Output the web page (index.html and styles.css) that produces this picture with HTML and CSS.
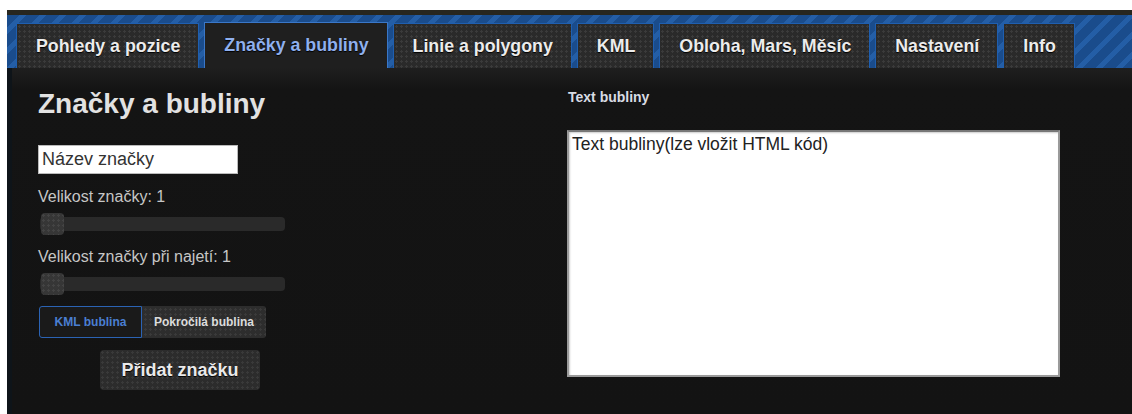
FILE: index.html
```html
<!DOCTYPE html>
<html lang="cs">
<head>
<meta charset="utf-8">
<title>Značky a bubliny</title>
<link rel="stylesheet" href="styles.css">
</head>
<body>
<div class="frame">
  <div class="topline"></div>
  <nav class="tabbar">
    <a class="tab">Pohledy a pozice</a>
    <a class="tab active">Značky a bubliny</a>
    <a class="tab">Linie a polygony</a>
    <a class="tab">KML</a>
    <a class="tab">Obloha, Mars, Měsíc</a>
    <a class="tab">Nastavení</a>
    <a class="tab">Info</a>
  </nav>
  <main class="panel">
    <section class="left">
      <h1 class="title">Značky a bubliny</h1>
      <input class="name" type="text" value="Název značky">
      <div class="label">Velikost značky: 1</div>
      <div class="slider"><span class="handle"></span></div>
      <div class="label">Velikost značky při najetí: 1</div>
      <div class="slider"><span class="handle"></span></div>
      <div class="toggle">
        <button class="seg on">KML bublina</button>
        <button class="seg">Pokročilá bublina</button>
      </div>
      <button class="add">Přidat značku</button>
    </section>
    <section class="right">
      <div class="small">Text bubliny</div>
      <textarea class="bubble">Text bubliny(lze vložit HTML kód)</textarea>
    </section>
  </main>
</div>
</body>
</html>
```

FILE: styles.css
```css
html, body {
  margin: 0;
  padding: 0;
  background: #fff;
}

.frame {
  padding: 10px 0 0 7px;
  height: 414px;
  box-sizing: border-box;
  font-family: "Liberation Sans", Arial, sans-serif;
  display: flex;
  flex-direction: column;
}

.topline {
  height: 5px;
  background: #27261f;
}

/* blue striped strip behind the tabs */
.tabbar {
  height: 53px;
  box-sizing: border-box;
  padding: 8px 0 0 9px;
  display: flex;
  align-items: flex-end;
  gap: 5px;
  background:
    repeating-linear-gradient(135deg, #1a4c8c 0 9px, #245ea6 9px 14px);
}

.tab {
  height: 45px;
  box-sizing: border-box;
  padding: 0 18px 0 19px;
  display: flex;
  align-items: center;
  border: 1px solid #1f5fb0;
  border-bottom: none;
  color: #ececec;
  font-weight: bold;
  font-size: 17.8px;
  text-shadow: 0 1px 1px #000;
  background-color: #2a2a2a;
  background-image: radial-gradient(circle, #3b3b3b 1px, transparent 1.3px);
  background-size: 5px 5px;
}

.tab.active {
  background: #1f1f1f;
  color: #8fb0ee;
  border-color: #3a77c8;
  height: 46px;
}

.panel {
  flex: 1;
  display: flex;
  border-left: 5px solid #0e1419;
  background: linear-gradient(#1f1f1f 0, #141414 22px, #131313 100%);
}

.left {
  width: 555px;
  box-sizing: border-box;
  padding: 20px 0 0 26px;
  display: flex;
  flex-direction: column;
  align-items: flex-start;
}

.title {
  margin: 0;
  font-size: 28px;
  line-height: 32px;
  font-weight: bold;
  color: #e2e2e2;
}

.name {
  margin: 25px 0 0 0;
  width: 200px;
  height: 29px;
  box-sizing: border-box;
  border: 1px solid #bbb;
  padding: 0 3px;
  font-family: inherit;
  font-size: 18px;
  color: #333;
  background: #fff;
  outline: none;
}

.label {
  margin-top: 14px;
  font-size: 16px;
  line-height: 18px;
  color: #c6c6c6;
}

.slider {
  position: relative;
  margin: 11px 0 0 2px;
  width: 245px;
  height: 14px;
  border-radius: 4px;
  background: #2a2a2a;
}

.slider .handle {
  position: absolute;
  left: 1px;
  top: -4px;
  width: 23px;
  height: 22px;
  border-radius: 4px;
  background-color: #363636;
  background-image: radial-gradient(circle, #444 1px, transparent 1.3px);
  background-size: 5px 5px;
}

.slider + .label {
  margin-top: 17px;
}

.toggle {
  margin: 15px 0 0 1px;
  display: flex;
}

.seg {
  height: 32px;
  padding: 0 11px;
  border: 1px solid transparent;
  border-radius: 3px;
  font-family: inherit;
  font-size: 12px;
  font-weight: bold;
  color: #dcdcdc;
  background-color: #2d2d2d;
  background-image: radial-gradient(circle, #3a3a3a 1px, transparent 1.3px);
  background-size: 5px 5px;
}

.seg.on {
  width: 103px;
  color: #4a7fd2;
  background: #1a1a1a;
  border-color: #2b63b4;
  border-radius: 3px 0 0 3px;
}

.seg:not(.on) {
  border-radius: 0 3px 3px 0;
}

.add {
  margin: 12px 0 0 62px;
  width: 160px;
  height: 40px;
  border: none;
  border-radius: 4px;
  font-family: inherit;
  font-size: 18px;
  font-weight: bold;
  color: #eaeaea;
  text-shadow: 0 1px 1px #000;
  background-color: #2c2c2c;
  background-image: radial-gradient(circle, #3a3a3a 1px, transparent 1.3px);
  background-size: 5px 5px;
}

.right {
  padding-top: 21px;
  display: flex;
  flex-direction: column;
}

.small {
  margin-left: 1px;
  font-size: 14px;
  font-weight: bold;
  color: #d8dce4;
  line-height: 16px;
}

.bubble {
  margin-top: 25px;
  width: 493px;
  height: 247px;
  box-sizing: border-box;
  resize: none;
  border: 2px solid #9a9a9a;
  border-top-color: #777;
  padding: 2px 3px;
  font-family: inherit;
  font-size: 17.5px;
  line-height: 20px;
  color: #222;
  background: #fff;
  box-shadow: inset 1px 1px 2px #ccc;
  outline: none;
}
```
